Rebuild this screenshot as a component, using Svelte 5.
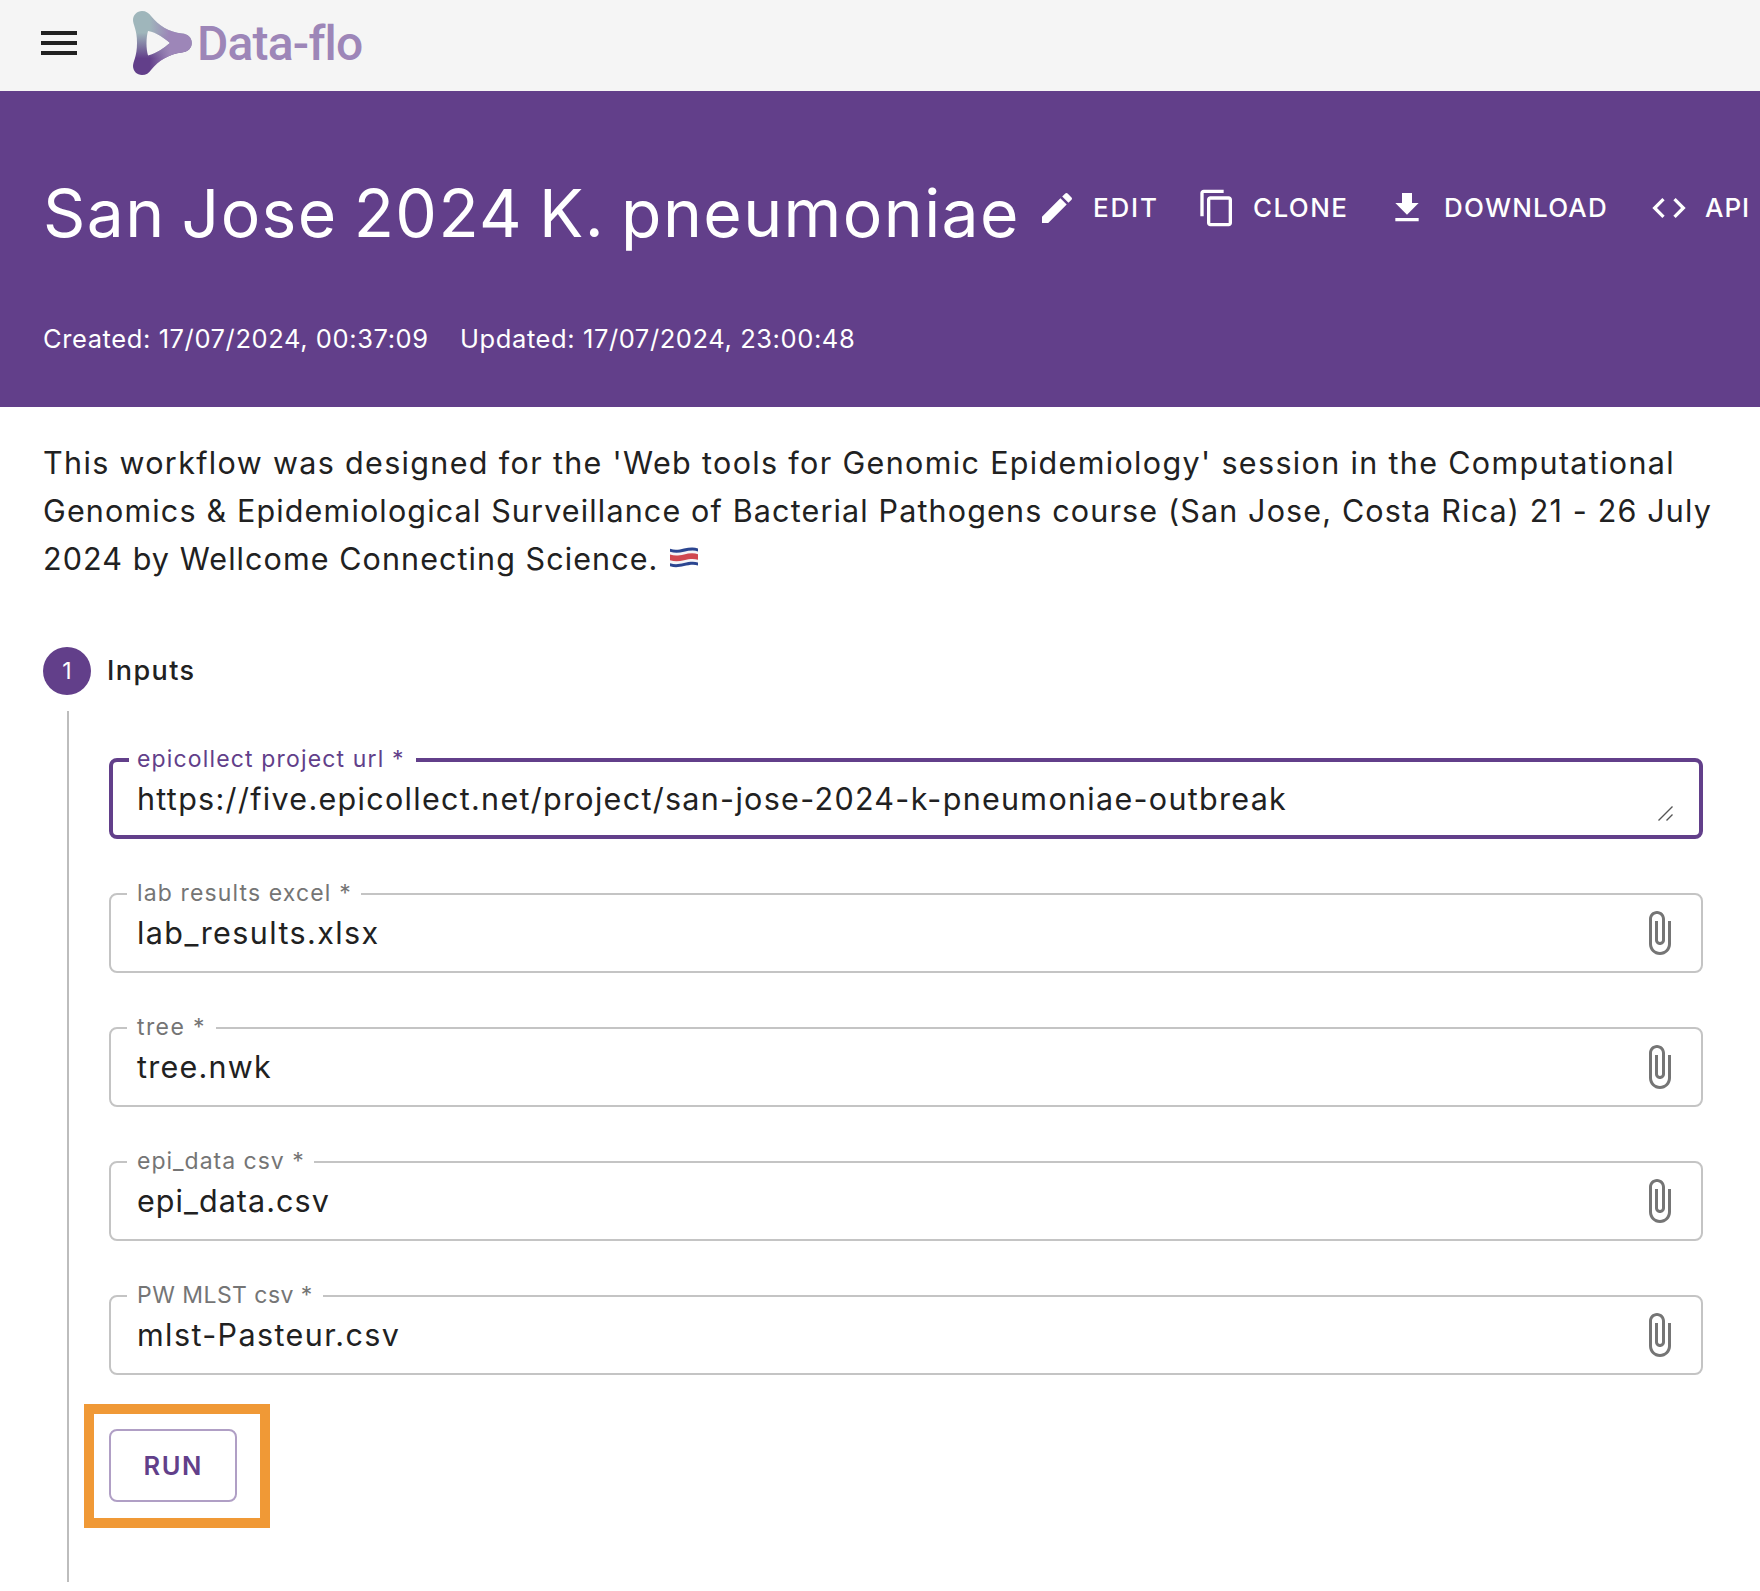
<script>
  const files = [
    { id: 'lab', label: 'lab results excel *', value: 'lab_results.xlsx' },
    { id: 'tree', label: 'tree *', value: 'tree.nwk' },
    { id: 'epi', label: 'epi_data csv *', value: 'epi_data.csv' },
    { id: 'mlst', label: 'PW MLST csv *', value: 'mlst-Pasteur.csv' }
  ];
  const actions = [
    { id: 'edit', text: 'EDIT', d: 'M3 17.25V21h3.75L17.81 9.94l-3.75-3.75L3 17.25zM20.71 7.04c.39-.39.39-1.02 0-1.41l-2.34-2.34a.9959.9959 0 0 0-1.41 0l-1.83 1.83 3.75 3.75 1.83-1.83z' },
    { id: 'clone', text: 'CLONE', d: 'M16 1H4c-1.1 0-2 .9-2 2v14h2V3h12V1zm3 4H8c-1.1 0-2 .9-2 2v14c0 1.1.9 2 2 2h11c1.1 0 2-.9 2-2V7c0-1.1-.9-2-2-2zm0 16H8V7h11v14z' },
    { id: 'download', text: 'DOWNLOAD', d: 'M19 9h-4V3H9v6H5l7 7 7-7zM5 18v2h14v-2H5z' },
    { id: 'api', text: 'API', d: 'M9.4 16.6 4.8 12l4.6-4.6L8 6l-6 6 6 6 1.4-1.4zm5.2 0 4.6-4.6-4.6-4.6L16 6l6 6-6 6-1.4-1.4z' }
  ];
</script>

<header class="topbar">
  <svg class="menu" viewBox="0 0 24 24"><path d="M3 18h18v-2H3v2zm0-5h18v-2H3v2zm0-7v2h18V6H3z" /></svg>
  <svg class="mark" viewBox="0 0 59 64">
    <defs>
      <linearGradient id="down" x1="0" y1="0" x2="0" y2="1">
        <stop offset="0.34" stop-color="#9fb6bb" />
        <stop offset="0.74" stop-color="#623f8a" />
      </linearGradient>
      <linearGradient id="across" x1="0" y1="0" x2="1" y2="0">
        <stop offset="0.28" stop-color="#9d86b8" stop-opacity="0" />
        <stop offset="0.62" stop-color="#9d86b8" />
      </linearGradient>
      <path id="play" fill-rule="evenodd" d="M0 9C0 4 4 0 9 0C13 0 16 2 18 5C26 15 36 21 49 22.6C55 23 58.8 27 58.8 32C58.8 37 55 41 49 41.4C36 43 26 49 18 59C16 62 13 64 9 64C4 64 0 60 0 55C0 50 4 46 4 32C4 18 0 14 0 9ZM15 20C24 21.5 31 27 37 32C31 37 24 42 15 44.5C13 38 13 27 15 20Z" />
    </defs>
    <use href="#play" fill="url(#down)" />
    <use href="#play" fill="url(#across)" />
  </svg>
  <span class="brand">Data-flo</span>
</header>

<section class="hero">
  <div class="title-row">
    <h1>San Jose 2024 K. pneumoniae</h1>
    <nav class="actions">
      {#each actions as a}
        <button class="action {a.id}">
          <svg viewBox="0 0 24 24"><path d={a.d} /></svg><span>{a.text}</span>
        </button>
      {/each}
    </nav>
  </div>
  <div class="meta">
    <span>Created: 17/07/2024, 00:37:09</span>
    <span>Updated: 17/07/2024, 23:00:48</span>
  </div>
</section>

<main>
  <p class="about">
    <span class="l1">This workflow was designed for the 'Web tools for Genomic Epidemiology' session in the Computational</span>
    <span class="l2">Genomics &amp; Epidemiological Surveillance of Bacterial Pathogens course (San Jose, Costa Rica) 21 - 26 July</span>
    <span class="l3">2024 by Wellcome Connecting Science.<svg class="flag" viewBox="0 0 28 21">
        <path fill="#f4f4f7" d="M0 2C5 4 9 3 14 1.8S24 0 28 1.5V18C24 16.500 19 17.500 14 18.800S4 20.500 0 19Z" />
        <path fill="#2b4590" d="M0 1.800C5 3.600 9 2.800 14 1.600S24 0 28 1.400V4.400C24 3 19 3.600 14 4.800S5 6.400 0 4.800ZM0 16.200C5 17.800 9 17.200 14 16S24 14.200 28 15.600V18.400C24 17 19 17.800 14 19S5 20.800 0 19.200Z" />
        <path fill="#d04850" d="M0 7.600C5 9.200 9 8.600 14 7.400S24 5.800 28 7.200V12.800C24 11.400 19 12 14 13.200S5 14.800 0 13.200Z" />
      </svg></span>
  </p>

  <div class="step-head">
    <span class="num">1</span>
    <h2>Inputs</h2>
  </div>

  <div class="step-body">
    <div class="field focused">
      <label for="url">epicollect project url *</label>
      <span class="value" id="url">https://five.epicollect.net/project/san-jose-2024-k-pneumoniae-outbreak</span>
      <svg class="grip" viewBox="0 0 15 15"><path d="M.5 14.500 14.500 .5M8.500 14.500 14.500 8.500" /></svg>
    </div>
    {#each files as f}
      <div class="field {f.id}">
        <label for={f.id}>{f.label}</label>
        <span class="value" id={f.id}>{f.value}</span>
        <svg class="clip" viewBox="0 0 24 24"><path d="M16.500 6v11.500c0 2.210-1.790 4-4 4s-4-1.790-4-4V5c0-1.380 1.120-2.500 2.500-2.500s2.500 1.120 2.500 2.500v10.500c0 .55-.45 1-1 1s-1-.45-1-1V6H10v9.500c0 1.380 1.120 2.500 2.500 2.500s2.500-1.120 2.500-2.500V5c0-2.210-1.790-4-4-4S7 2.790 7 5v12.500c0 3.040 2.460 5.500 5.500 5.500s5.500-2.460 5.500-5.500V6h-1.500z" /></svg>
      </div>
    {/each}
    <div class="highlight"><button class="run">RUN</button></div>
  </div>
</main>

<style>
  :global(body) {
    margin: 0;
    background: #fff;
    color: #212121;
    font-family: Inter, "Liberation Sans", sans-serif;
    overflow: hidden;
  }
  h1, h2, p { margin: 0; }
  button { font-family: inherit; background: none; border: 0; padding: 0; margin: 0; }

  .topbar { display: flex; align-items: flex-start; height: 91px; background: #f5f5f5; }
  .menu { width: 48px; height: 48px; margin: 19px 0 0 35px; fill: #212121; }
  .mark { width: 59px; height: 64px; margin: 11px 0 0 50px; }
  .brand {
    margin-left: 5px;
    font: 500 48px/88px Roboto, sans-serif;
    letter-spacing: -0.8px;
    color: #9d86b8;
  }

  .hero { box-sizing: border-box; height: 316px; padding: 82px 0 0 43px; background: #623f8a; color: #fff; overflow: hidden; }
  .title-row { display: flex; align-items: flex-start; }
  h1 { flex: 0 0 994px; font-size: 66px; line-height: 80px; font-weight: 400; letter-spacing: 1.4px; word-spacing: -4px; white-space: nowrap; }
  .actions { display: grid; grid-template-columns: 160px 190px 262px 111px; margin-top: 15px; }
  .action { display: flex; align-items: center; gap: 16px; color: #fff; font-size: 26px; line-height: 40px; font-weight: 500; letter-spacing: 1.4px; }
  .action svg { width: 40px; height: 40px; fill: #fff; }
  .action.edit { letter-spacing: 1.8px; }
  .action.download { letter-spacing: 1.2px; gap: 17px; }
  .action.api { letter-spacing: 1px; }
  .meta { display: grid; grid-template-columns: 417px auto; margin-top: 71px; font-size: 25.5px; line-height: 30px; letter-spacing: 0.59px; white-space: nowrap; }

  main { padding: 32px 0 0 43px; }
  .about { display: flex; flex-direction: column; font-size: 30.5px; line-height: 48px; white-space: nowrap; }
  .about span { height: 48px; }
  .l1 { letter-spacing: 1.34px; }
  .l2 { letter-spacing: 1.15px; }
  .l3 { letter-spacing: 1.08px; }
  .flag { width: 28px; height: 21px; margin-left: 12px; vertical-align: 2px; }

  .step-head { display: flex; align-items: center; gap: 16px; margin-top: 64px; }
  .num { width: 48px; height: 48px; border-radius: 50%; background: #623f8a; color: #fff; font-size: 23px; line-height: 48px; text-align: center; }
  h2 { font-size: 27px; line-height: 48px; font-weight: 500; letter-spacing: 1.4px; }

  .step-body { box-sizing: border-box; height: 871px; width: 1636px; margin: 16px 0 0 24px; padding: 47px 0 0 40px; border-left: 2px solid #bdbdbd; }
  .field {
    position: relative;
    display: flex;
    align-items: center;
    box-sizing: border-box;
    height: 80px;
    margin-bottom: 54px;
    padding: 0 18px 0 26px;
    border: 2px solid #c4c4c4;
    border-radius: 8px;
  }
  .value { flex: 1; font-size: 30.5px; line-height: 48px; letter-spacing: 1.4px; white-space: nowrap; }
  label {
    position: absolute;
    box-sizing: border-box;
    top: -14px;
    left: 16px;
    height: 24px;
    padding-left: 10px;
    background: #fff;
    color: #757575;
    font-size: 23px;
    line-height: 24px;
    letter-spacing: 1.13px;
    white-space: nowrap;
  }
  .clip { width: 48px; height: 48px; fill: #757575; }
  .focused { height: 81px; padding: 1px 26px 0 24px; border: 4px solid #623f8a; }
  .focused label { top: -15px; width: 287px; padding-left: 8px; color: #623f8a; letter-spacing: 1.15px; }
  .focused .value { letter-spacing: 1.3px; }
  .grip { align-self: flex-end; width: 15px; height: 15px; margin-bottom: 14px; fill: none; stroke: #555; stroke-width: 1.4; }
  .lab label { width: 234px; }
  .tree label { width: 89px; letter-spacing: 1.4px; }
  .tree .value { letter-spacing: 1.25px; }
  .epi label { width: 187px; letter-spacing: 1px; }
  .epi .value { letter-spacing: 1.05px; }
  .mlst label { width: 196px; letter-spacing: 0.46px; }

  .highlight { box-sizing: border-box; width: 186px; height: 124px; margin: -25px 0 0 -25px; padding: 15px; border: 10px solid #f09936; }
  .run {
    display: block;
    box-sizing: border-box;
    width: 128px;
    height: 73px;
    padding-left: 32.5px;
    border: 2px solid #b09fc5;
    border-radius: 8px;
    color: #623f8a;
    font-size: 25.5px;
    line-height: 69px;
    font-weight: 600;
    letter-spacing: 1.55px;
    text-align: left;
  }
</style>
